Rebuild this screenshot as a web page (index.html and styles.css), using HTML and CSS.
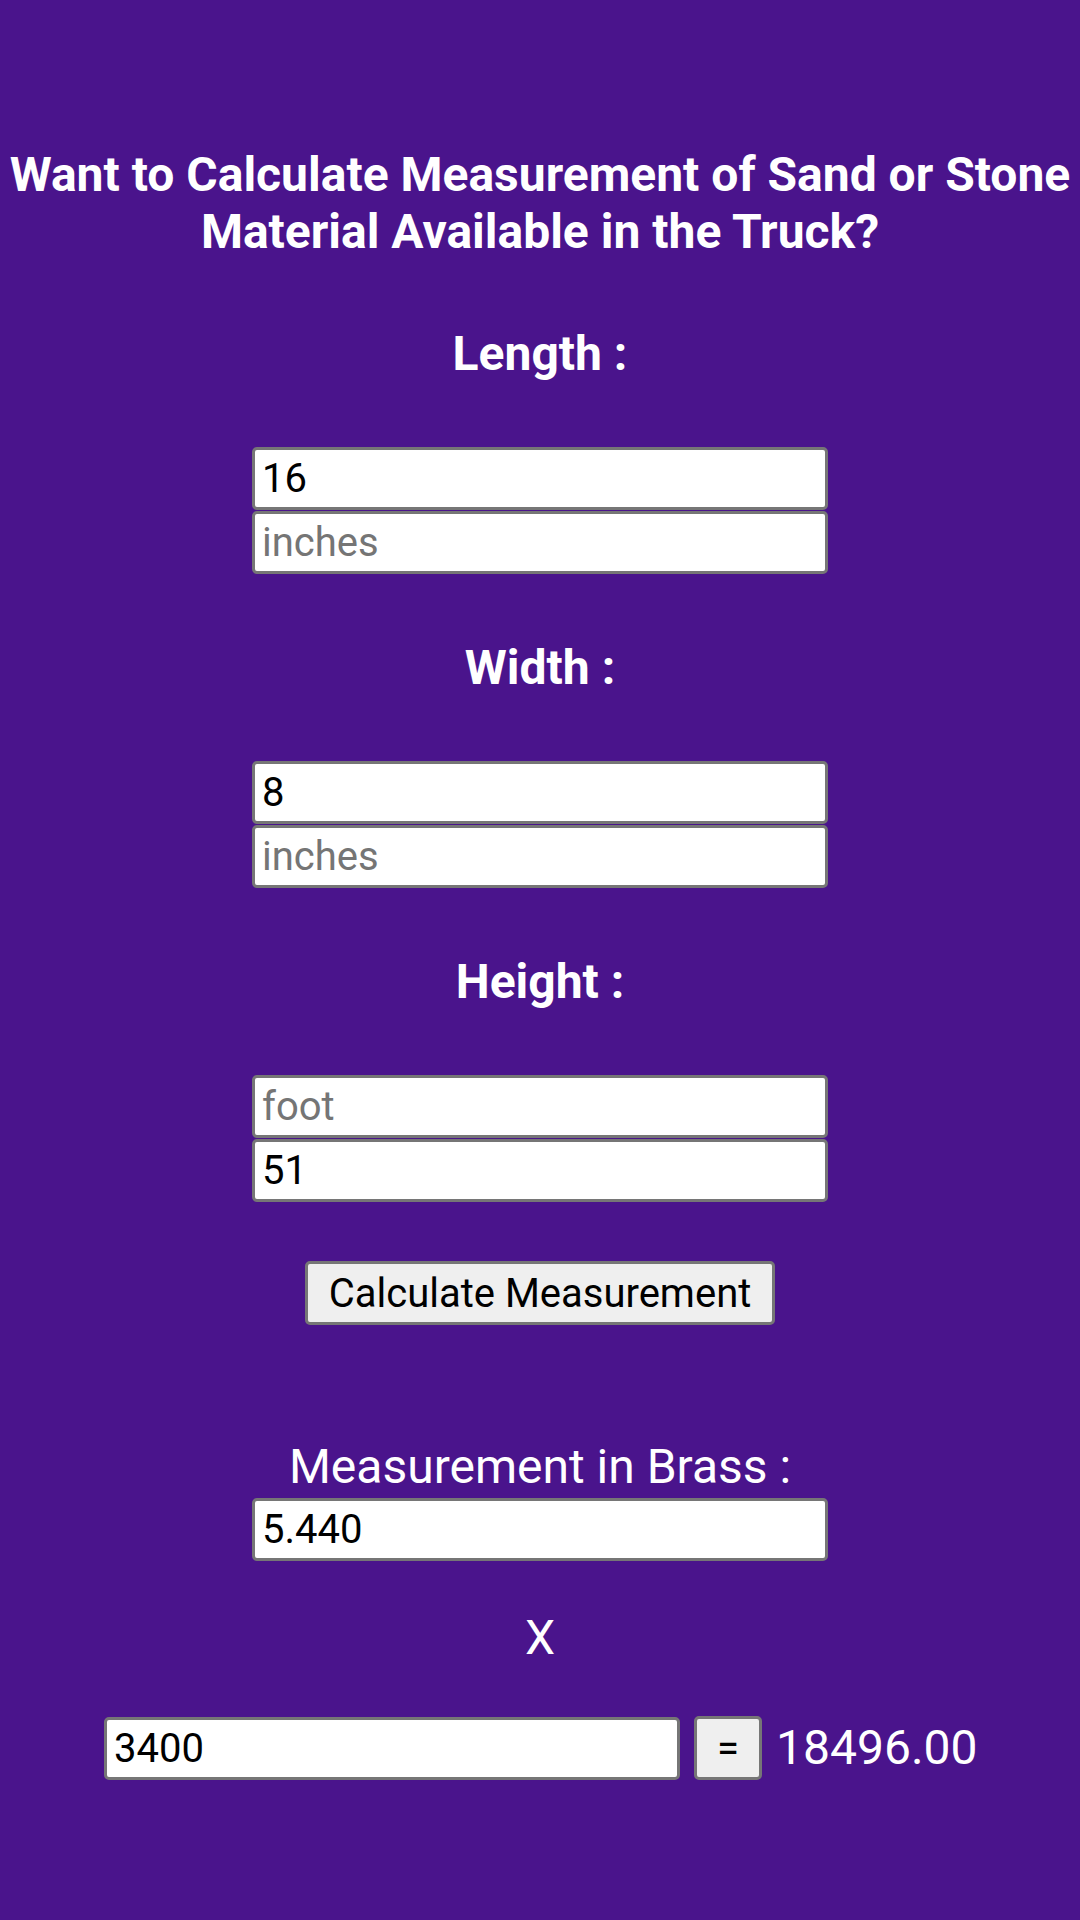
FILE: index.html
```html
<!DOCTYPE html>
<html>
<head>
<meta charset="utf-8">
<link rel="stylesheet" href="styles.css">
</head>
<body>
<main class="page">
  <h1 class="title">Want to Calculate Measurement of Sand or Stone Material Available in the Truck?</h1>

  <h2 class="label">Length :</h2>
  <div class="pair">
    <input class="field" type="text" value="16">
    <input class="field" type="text" placeholder="inches">
  </div>

  <h2 class="label">Width :</h2>
  <div class="pair">
    <input class="field" type="text" value="8">
    <input class="field" type="text" placeholder="inches">
  </div>

  <h2 class="label">Height :</h2>
  <div class="pair">
    <input class="field" type="text" placeholder="foot">
    <input class="field" type="text" value="51">
  </div>

  <button class="btn calc" type="button">Calculate Measurement</button>

  <p class="result-label">Measurement in Brass :</p>
  <input class="field" type="text" value="5.440">

  <p class="times">X</p>

  <div class="rate-row">
    <input class="field" type="text" value="3400">
    <button class="btn eq" type="button">=</button>
    <span class="total">18496.00</span>
  </div>
</main>
</body>
</html>
```

FILE: styles.css
```css
html, body {
  margin: 0;
  padding: 0;
  background: #4a148c;
}
body {
  width: 1080px;
  height: 1920px;
  font-family: Roboto, "Noto Sans", sans-serif;
  color: #ffffff;
}
.page {
  display: flex;
  flex-direction: column;
  align-items: center;
  padding-top: 146px;
}
.title {
  margin: 0;
  font-size: 48px;
  line-height: 57px;
  font-weight: 700;
  text-align: center;
  width: 1080px;
}
.label {
  margin: 66px 0 65px;
  font-size: 48px;
  line-height: 56px;
  font-weight: 700;
}
.pair {
  display: flex;
  flex-direction: column;
  gap: 1px;
}
.field {
  box-sizing: border-box;
  width: 576px;
  height: 63px;
  margin: 0;
  padding: 0 7px;
  border: 3px solid #767676;
  border-radius: 5px;
  background: #ffffff;
  font-family: Roboto, sans-serif;
  font-size: 40px;
  color: #000000;
  outline: none;
}
.field::placeholder {
  color: #757575;
}
.btn {
  box-sizing: border-box;
  height: 64px;
  margin: 0;
  border: 3px solid #767676;
  border-radius: 5px;
  background: #efefef;
  color: #000000;
  font-family: Roboto, sans-serif;
  font-size: 40px;
}
.calc {
  margin-top: 59px;
  width: 470px;
  padding: 0 12px;
}
.result-label {
  margin: 114px 0 3px;
  font-size: 48px;
  line-height: 56px;
  font-weight: 400;
}
.times {
  margin: 49px 0 50px;
  font-size: 48px;
  line-height: 56px;
}
.rate-row {
  display: flex;
  align-items: center;
  gap: 14px;
}
.eq {
  width: 68px;
  padding: 0;
}
.total {
  font-size: 48px;
  line-height: 56px;
  width: 200px;
}
```
